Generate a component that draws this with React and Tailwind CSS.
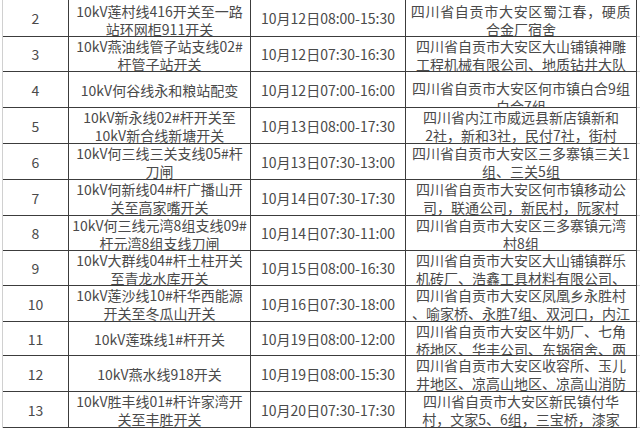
import React from 'react';

const rows = [
    { no: '2', h: 'h-[37px]', line: ['10kV莲村线416开关至一路', '站环网柜911开关'], time: '10月12日08:00-15:30', area: ['四川省自贡市大安区蜀江春，硬质', '合金厂宿舍'], wide: true, first: true },
    { no: '3', h: 'h-[35px]', line: ['10kV燕油线管子站支线02#', '杆管子站开关'], time: '10月12日07:30-16:30', area: ['四川省自贡市大安区大山铺镇神雕', '工程机械有限公司、地质钻井大队'] },
    { no: '4', h: 'h-[36px]', line: ['10kV何谷线永和粮站配变'], time: '10月12日07:00-16:00', area: ['四川省自贡市大安区何市镇白合9组', '白合7组'], shift: true },
    { no: '5', h: 'h-[36px]', line: ['10kV新永线02#杆开关至', '10kV新合线新塘开关'], time: '10月13日08:00-17:30', area: ['四川省内江市威远县新店镇新和', '2社，新和3社，民付7社，街村'] },
    { no: '6', h: 'h-[36px]', line: ['10kV何三线三关支线05#杆', '刀闸'], time: '10月13日07:30-13:00', area: ['四川省自贡市大安区三多寨镇三关1', '组、三关5组'] },
    { no: '7', h: 'h-[36px]', line: ['10kV何新线04#杆广播山开', '关至高家嘴开关'], time: '10月14日07:30-17:30', area: ['四川省自贡市大安区何市镇移动公', '司，联通公司，新民村，阮家村'] },
    { no: '8', h: 'h-[35px]', line: ['10kV何三线元湾8组支线09#', '杆元湾8组支线刀闸'], time: '10月14日07:30-11:00', area: ['四川省自贡市大安区三多寨镇元湾', '村8组'] },
    { no: '9', h: 'h-[35px]', line: ['10kV大群线04#杆土柱开关', '至青龙水库开关'], time: '10月15日08:00-16:30', area: ['四川省自贡市大安区大山铺镇群乐', '机砖厂、浩鑫工具材料有限公司、'] },
    { no: '10', h: 'h-[36px]', line: ['10kV莲沙线10#杆华西能源', '开关至冬瓜山开关'], time: '10月16日07:30-18:00', area: ['四川省自贡市大安区凤凰乡永胜村', '、喻家桥、永胜7组、双河口，内江'] },
    { no: '11', h: 'h-[34px]', line: ['10kV莲珠线1#杆开关'], time: '10月19日08:00-12:00', area: ['四川省自贡市大安区牛奶厂、七角', '桥地区、华丰公司、东锅宿舍、两'] },
    { no: '12', h: 'h-[36px]', line: ['10kV燕水线918开关'], time: '10月19日08:00-15:30', area: ['四川省自贡市大安区收容所、玉儿', '井地区、凉高山地区、凉高山消防'] },
    { no: '13', h: 'h-[36px]', line: ['10kV胜丰线01#杆许家湾开', '关至丰胜开关'], time: '10月20日07:30-17:30', area: ['四川省自贡市大安区新民镇付华', '村，文家5、6组，三宝桥，漆家'] },
];

// multi-line cells sit at the top and get clipped, single lines are centred
const Cell = ({ lines, width, extra = '' }) => (
    <div className={`${width} h-full border-r border-b border-[#3c3c3c] overflow-hidden flex flex-col items-center ${lines.length > 1 ? 'justify-start' : 'justify-center'} ${extra}`}>
        {lines.map((t, i) => (
            <span key={i} className="whitespace-nowrap leading-[18px]">{t}</span>
        ))}
    </div>
);

export default function App() {
    return (
        <div
            className="w-[640px] h-[429px] overflow-hidden bg-white text-[14px] text-[#4a4a4a]"
            style={{ fontFamily: '"Noto Sans CJK SC", "Noto Sans", sans-serif' }}
        >
            {rows.map((r) => (
                <div key={r.no} className={`flex ${r.h}`}>
                    <div className="w-[3px] h-full border-r border-[#d0d0d0]" />
                    <Cell width="w-[66px]" lines={[r.no]} />
                    <Cell width="w-[182px]" lines={r.line} extra={r.first ? 'pt-[2px]' : ''} />
                    <Cell width="w-[155px]" lines={[r.time]} />
                    <div className={`w-[231px] h-full border-r border-b border-[#3c3c3c] overflow-hidden flex flex-col items-center justify-start ${r.first ? 'pt-[2px]' : ''}`}>
                        {r.area.map((t, i) => (
                            <span
                                key={i}
                                className={`whitespace-nowrap leading-[18px] ${r.shift && i === 0 ? 'mt-[7px]' : ''} ${r.wide && i === 0 ? 'tracking-[0.7px]' : ''}`}
                            >
                                {t}
                            </span>
                        ))}
                    </div>
                    <div className="flex-1 h-full border-b border-[#d0d0d0]" />
                </div>
            ))}
        </div>
    );
}
